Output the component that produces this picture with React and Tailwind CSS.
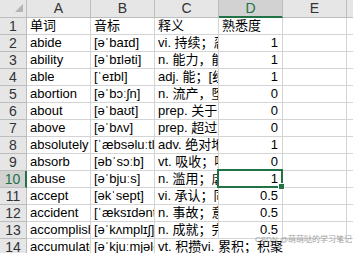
import React from 'react';

const FONT = { fontFamily: '"Liberation Sans", Arial, "Noto Sans CJK SC", sans-serif' };

const cols = ['A', 'B', 'C', 'D', 'E', ''];

const rows = [
  ['单词', '音标', '释义', '熟悉度'],
  ['abide', '[əˈbaɪd]', 'vi. 持续；忍受', 1],
  ['ability', '[əˈbɪləti]', 'n. 能力，能耐', 1],
  ['able', '[ˈeɪbl]', 'adj. 能；[经] 有能力的', 1],
  ['abortion', '[əˈbɔːʃn]', 'n. 流产，堕胎', 0],
  ['about', '[əˈbaʊt]', 'prep. 关于', 0],
  ['above', '[əˈbʌv]', 'prep. 超过', 0],
  ['absolutely', '[ˈæbsəluːtli]', 'adv. 绝对地', 1],
  ['absorb', '[əbˈsɔːb]', 'vt. 吸收；吸引', 0],
  ['abuse', '[əˈbjuːs]', 'n. 滥用；虐待', 1],
  ['accept', '[əkˈsept]', 'vi. 承认；同意', 0.5],
  ['accident', '[ˈæksɪdənt]', 'n. 事故；意外', 0.5],
  ['accomplish', '[əˈkʌmplɪʃ]', 'n. 成就；完成', 0.5],
  ['accumulate', '[əˈkjuːmjəleɪt]', 'vt. 积攒vi. 累积；积聚', null],
];

const Cell = ({ children, className = '' }) => (
  <div
    className={`h-[17px] shrink-0 border-r border-b border-[#d4d4d4] overflow-hidden whitespace-nowrap text-[13px] leading-[16px] text-black flex items-end ${className}`}
  >
    {children}
  </div>
);

export default function App() {
  return (
    <div className="relative w-[353px] h-[253px] overflow-hidden bg-white" style={FONT}>
      {/* column headers */}
      <div className="flex">
        <div className="w-[27px] h-[18px] shrink-0 bg-[#e6e6e6] border-r border-b border-[#bdbdbd] flex items-end justify-end pr-[3px] pb-[5px]">
          <svg width="8" height="8" viewBox="0 0 8 8">
            <path d="M8 0 L8 8 L0 8 Z" fill="#b4b4b4" />
          </svg>
        </div>
        {cols.map((c, k) => {
          const sel = c === 'D';
          return (
            <div
              key={k}
              className={`w-[64px] h-[18px] shrink-0 border-r flex items-center justify-center text-[14px] ${
                sel
                  ? 'bg-[#d2d2d2] text-[#217346] border-b-2 border-b-[#217346] border-r-[#bdbdbd]'
                  : 'bg-[#e6e6e6] text-[#333] border-b border-[#bdbdbd]'
              }`}
            >
              {c}
            </div>
          );
        })}
      </div>

      {rows.map((r, i) => {
        const n = i + 1;
        const selRow = n === 10;
        const last = n === 14;
        return (
          <div key={n} className="flex">
            <div
              className={`w-[27px] h-[17px] shrink-0 border-b flex items-center justify-center text-[14px] ${
                selRow
                  ? 'bg-[#d2d2d2] text-[#217346] border-r-2 border-r-[#217346] border-b-[#bdbdbd]'
                  : 'bg-[#e6e6e6] text-[#333] border-r border-[#bdbdbd]'
              }`}
            >
              {n}
            </div>
            <Cell className="w-[64px] pl-[3px]">{r[0]}</Cell>
            <Cell className="w-[64px] pl-[3px]">{r[1]}</Cell>
            {last ? (
              <Cell className="w-[192px] pl-[3px] border-r-0">{r[2]}</Cell>
            ) : (
              <Cell className="w-[64px] pl-[3px]">{r[2]}</Cell>
            )}
            {!last && (
              <Cell
                className={`w-[64px] ${
                  typeof r[3] === 'number' ? 'justify-end pr-[4px]' : 'pl-[3px]'
                } ${selRow ? 'relative overflow-visible' : ''}`}
              >
                {r[3]}
                {selRow && (
                  <div className="absolute -top-[2px] -left-[2px] -right-[1px] -bottom-[1px] border-2 border-[#217346] pointer-events-none">
                    <div className="absolute -right-[4px] -bottom-[4px] w-[7px] h-[7px] bg-[#217346] border border-white" />
                  </div>
                )}
              </Cell>
            )}
            {!last && <Cell className="w-[64px]" />}
            <Cell className="w-[64px]" />
          </div>
        );
      })}

      {/* watermark */}
      <div className="absolute left-[255px] top-[235px] text-[8px] leading-[10px] text-[#8a8a8a] opacity-80 whitespace-nowrap">
        CSDN @萌萌哒的学习笔记
      </div>
    </div>
  );
}
